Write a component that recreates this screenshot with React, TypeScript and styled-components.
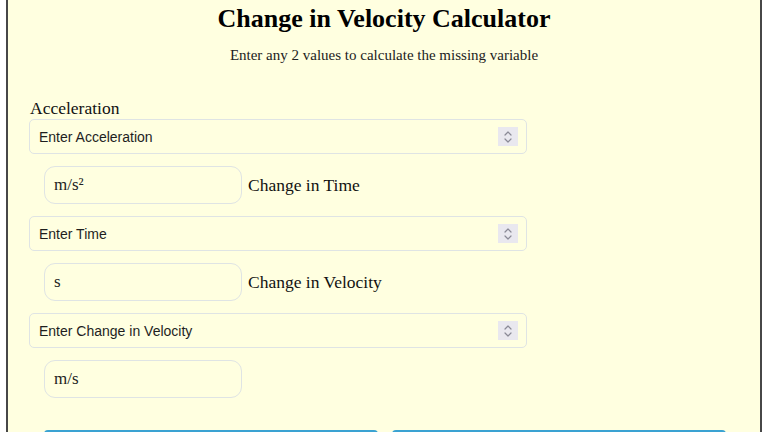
import * as React from 'react';
import styled, { createGlobalStyle } from 'styled-components';

const GlobalStyle = createGlobalStyle`
  html, body {
    margin: 0;
    padding: 0;
    background: #ffffff;
    overflow: hidden;
  }
  body {
    font-family: "Liberation Serif", "Times New Roman", serif;
  }
`;

type Field = {
  label: string;
  placeholder: string;
  unit: string;
};

const fields: Field[] = [
  { label: 'Acceleration', placeholder: 'Enter Acceleration', unit: 'm/s²' },
  { label: 'Change in Time', placeholder: 'Enter Time', unit: 's' },
  { label: 'Change in Velocity', placeholder: 'Enter Change in Velocity', unit: 'm/s' },
];

const Spinner: React.FC = () => (
  <SpinBox>
    <svg width="10" height="14" viewBox="0 0 10 14" fill="none">
      <path d="M2 5 L5 2 L8 5" stroke="#8a8a96" strokeWidth="1.2" strokeLinecap="round" strokeLinejoin="round" />
      <path d="M2 9 L5 12 L8 9" stroke="#8a8a96" strokeWidth="1.2" strokeLinecap="round" strokeLinejoin="round" />
    </svg>
  </SpinBox>
);

const App: React.FC = () => {
  return (
    <>
      <GlobalStyle />
      <Panel>
        <Title>Change in Velocity Calculator</Title>
        <Subtitle>Enter any 2 values to calculate the missing variable</Subtitle>
        <Form>
          {fields.map((f, i) => (
            <FieldBlock key={f.label}>
              {i === 0 && <Label>{f.label}</Label>}
              <InputBox>
                <TextInput placeholder={f.placeholder} />
                <Spinner />
              </InputBox>
              <UnitRow>
                <UnitBox>{f.unit}</UnitBox>
                {fields[i + 1] && <Label>{fields[i + 1].label}</Label>}
              </UnitRow>
            </FieldBlock>
          ))}
          <ButtonRow>
            <ActionButton aria-label="Calculate" />
            <ActionButton aria-label="Reset" />
          </ButtonRow>
        </Form>
      </Panel>
    </>
  );
};

const Panel = styled.div`
  margin: 0 2px 0 6px;
  width: 756px;
  min-height: 520px;
  background: #ffffe0;
  border-left: 2px solid #474747;
  border-right: 2px solid #474747;
  padding: 4px 0 0 21px;
  box-sizing: border-box;
`;

const Title = styled.h1`
  margin: 0;
  text-align: center;
  font-size: 26px;
  font-weight: bold;
  color: #000;
  line-height: 30px;
  padding-right: 21px;
`;

const Subtitle = styled.p`
  margin: 12px 0 0;
  text-align: center;
  font-size: 15px;
  color: #222;
  line-height: 18px;
  padding-right: 21px;
`;

const Form = styled.div`
  margin-top: 33px;
  display: flex;
  flex-direction: column;
`;

const FieldBlock = styled.div`
  display: flex;
  flex-direction: column;
`;

const Label = styled.span`
  font-size: 17.5px;
  color: #111;
  line-height: 22px;
  padding-left: 1px;
`;

const InputBox = styled.div`
  width: 498px;
  height: 35px;
  box-sizing: border-box;
  display: flex;
  align-items: center;
  border: 1.5px solid #dfe4e4;
  border-radius: 5px;
  padding: 0 8px 0 9px;
`;

const TextInput = styled.input`
  flex: 1;
  border: none;
  outline: none;
  background: transparent;
  font-family: "Liberation Sans", Arial, sans-serif;
  font-size: 14px;
  color: #222;
  padding: 0;
  &::placeholder {
    color: #1e1e1e;
  }
`;

const SpinBox = styled.span`
  width: 20px;
  height: 19px;
  background: #e9e8ef;
  display: flex;
  align-items: center;
  justify-content: center;
`;

const UnitRow = styled.div`
  display: flex;
  align-items: center;
  gap: 5px;
  padding-left: 15px;
  margin: 12px 0;
`;

const UnitBox = styled.div`
  width: 198px;
  height: 38px;
  box-sizing: border-box;
  border: 1.5px solid #dfe4e4;
  border-radius: 11px;
  display: flex;
  align-items: center;
  padding-left: 9px;
  font-size: 17px;
  color: #222;
`;

const ButtonRow = styled.div`
  display: flex;
  gap: 14px;
  padding-left: 15px;
  margin-top: 20px;
`;

const ActionButton = styled.button`
  width: 334px;
  height: 44px;
  border: 2px solid #3aa2d2;
  border-radius: 4px;
  background: #ffffe0;
`;

export default App;
